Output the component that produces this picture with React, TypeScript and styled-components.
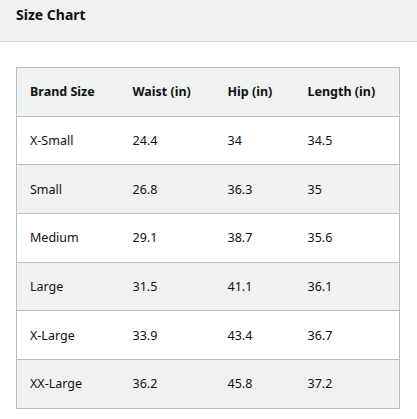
import React from "react";
import styled, { createGlobalStyle } from "styled-components";

const Global = createGlobalStyle`
  html, body { margin: 0; padding: 0; background: #ffffff; }
  body { font-family: "Noto Sans", "Open Sans", Arial, sans-serif; color: #0f1111; }
  *, *::before, *::after { box-sizing: border-box; }
`;

const Page = styled.div`
  width: 417px;
  height: 419px;
  display: flex;
  flex-direction: column;
  background: #ffffff;
`;

const Header = styled.div`
  height: 42px;
  background: #f0f2f2;
  border-bottom: 1px solid #d5d9d9;
  padding: 5px 0 0 16px;
  font-size: 14px;
  font-weight: 700;
  color: #0f1111;
`;

const Body = styled.div`
  padding: 25px 18px 0 16px;
`;

const Table = styled.table`
  width: 383px;
  border-collapse: collapse;
  border: 1px solid #bbbfbf;
  table-layout: fixed;
  font-size: 12.5px;
`;

const Row = styled.tr<{ $shaded: boolean }>`
  background: ${(p) => (p.$shaded ? "#f0f2f2" : "#ffffff")};
  height: 48.7px;
  & + & { border-top: 1px solid #bbbfbf; }
`;

const Th = styled.th<{ $w: number }>`
  width: ${(p) => p.$w}px;
  text-align: left;
  font-weight: 700;
  padding: 0 0 0 13px;
  color: #0f1111;
`;

const Td = styled.td`
  padding: 0 0 0 13px;
  color: #0f1111;
`;

const cols = [
  { label: "Brand Size", w: 103 },
  { label: "Waist (in)", w: 95 },
  { label: "Hip (in)", w: 80 },
  { label: "Length (in)", w: 105 },
];

const data = [
  ["X-Small", "24.4", "34", "34.5"],
  ["Small", "26.8", "36.3", "35"],
  ["Medium", "29.1", "38.7", "35.6"],
  ["Large", "31.5", "41.1", "36.1"],
  ["X-Large", "33.9", "43.4", "36.7"],
  ["XX-Large", "36.2", "45.8", "37.2"],
];

export default function App() {
  return (
    <Page>
      <Global />
      <Header>Size Chart</Header>
      <Body>
        <Table>
          <tbody>
            <Row $shaded>
              {cols.map((c) => (
                <Th key={c.label} $w={c.w}>{c.label}</Th>
              ))}
            </Row>
            {data.map((r, i) => (
              <Row key={r[0]} $shaded={i % 2 === 1}>
                {r.map((v, j) => (
                  <Td key={j}>{v}</Td>
                ))}
              </Row>
            ))}
          </tbody>
        </Table>
      </Body>
    </Page>
  );
}
